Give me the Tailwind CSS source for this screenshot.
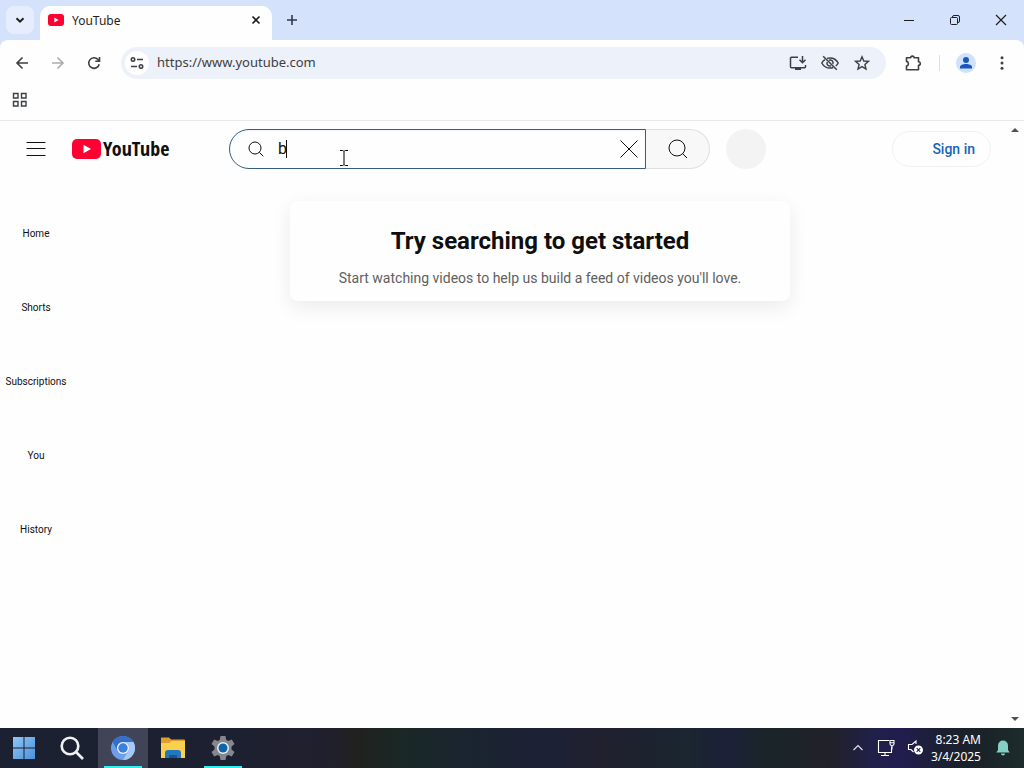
<!DOCTYPE html>
<html lang="en">
<head>
    <meta charset="UTF-8">
    <meta name="viewport" content="width=device-width, initial-scale=1.0">
    <title>YouTube</title>
    <script src="https://cdn.jsdelivr.net/npm/@tailwindcss/browser@4"></script>
</head>
<body class="flex flex-col h-screen overflow-hidden bg-[#d5e2fc] font-['Noto_Sans',sans-serif] text-[#1f1f1f]">
    <!-- Tab strip -->
    <div class="flex h-10 shrink-0 items-center">
        <button aria-label="Search tabs" class="ml-1.5 flex size-7 items-center justify-center rounded-lg bg-[#e6eefd]">
            <svg class="size-4" viewBox="0 0 16 16" fill="none" stroke="currentColor" stroke-width="2"><path d="M4.5 6.2 8 9.7l3.500-3.500"/></svg>
        </button>
        <div class="ml-1.5 flex w-58 items-center gap-2 self-end rounded-t-[10px] bg-[#fefefe] h-[34px] px-2 pb-1.5">
            <svg class="h-4 w-4" viewBox="0 0 16 16"><rect y="2" width="16" height="12" rx="3" fill="#f03"/><path d="M6.300 5.500v5L10.600 8z" fill="#fff"/></svg>
            <span class="flex-1 pt-0.5 text-xs">YouTube</span>
            <button aria-label="Close tab" class="flex size-4 items-center justify-center">
                <svg class="size-4" viewBox="0 0 16 16" fill="none" stroke="currentColor" stroke-width="1.600"><path d="m4.500 4.500 7 7m0-7-7 7"/></svg>
            </button>
        </div>
        <button aria-label="New tab" class="ml-3 flex size-4 items-center justify-center text-[#30394a]">
            <svg class="size-4" viewBox="0 0 16 16" fill="none" stroke="currentColor" stroke-width="1.600"><path d="M8 3v10M3 8h10"/></svg>
        </button>
        <div class="ml-auto flex">
            <button aria-label="Minimize" class="flex h-10 w-[46px] items-center justify-center">
                <svg class="size-4" viewBox="0 0 16 16" fill="none" stroke="currentColor"><path d="M3 8.500h10"/></svg>
            </button>
            <button aria-label="Restore" class="flex h-10 w-[46px] items-center justify-center">
                <svg class="size-4" viewBox="0 0 16 16" fill="none" stroke="currentColor"><rect x="3.500" y="5.500" width="7" height="7" rx="1"/><path d="M5.500 5.500V5a1.500 1.500 0 0 1 1.500-1.500h4A1.500 1.500 0 0 1 12.500 5v4a1.500 1.500 0 0 1-1.500 1.500"/></svg>
            </button>
            <button aria-label="Close" class="flex h-10 w-[46px] items-center justify-center">
                <svg class="size-4" viewBox="0 0 16 16" fill="none" stroke="currentColor" stroke-width="1.200"><path d="m3 3 10 10M13 3 3 13"/></svg>
            </button>
        </div>
    </div>

    <!-- Toolbar -->
    <div class="flex h-[46px] shrink-0 items-center rounded-t-lg bg-[#fefefe] text-[#3c4043]">
        <button aria-label="Back" class="flex w-9 justify-center ml-1">
            <svg class="size-4" viewBox="0 0 16 16" fill="none" stroke="currentColor" stroke-width="1.600"><path d="M14 8H3m5.500-5.500L3 8l5.500 5.500"/></svg>
        </button>
        <button aria-label="Forward" class="flex w-9 justify-center text-[#aaacb0]">
            <svg class="size-4" viewBox="0 0 16 16" fill="none" stroke="currentColor" stroke-width="1.600"><path d="M2 8h11M7.500 2.500 13 8l-5.500 5.500"/></svg>
        </button>
        <button aria-label="Reload" class="flex w-9 justify-center">
            <svg class="size-4" viewBox="0 0 16 16" fill="none" stroke="currentColor" stroke-width="1.600"><path d="M13.200 9.200A5.300 5.300 0 1 1 12 4.500l1.300 1.400M13.500 2v4.200H9.300"/></svg>
        </button>
        <div class="ml-[9px] flex h-8 flex-1 items-center rounded-full bg-[#edf1f9] pl-1 pr-4">
            <button aria-label="View site information" class="flex size-6 items-center justify-center rounded-full bg-[#fefefe]">
                <svg class="size-4" viewBox="0 0 16 16" fill="none" stroke="currentColor" stroke-width="1.600"><circle cx="4" cy="4.500" r="1.700"/><path d="M8 4.500h6M2 11.500h6"/><circle cx="12" cy="11.500" r="1.700"/></svg>
            </button>
            <input aria-label="Address" type="text" value="https://www.youtube.com" class="ml-2 min-w-0 flex-1 text-[13px] outline-none">
            <div class="flex gap-4">
                <button aria-label="Install YouTube">
                    <svg class="h-4 w-4 overflow-visible" viewBox="0 0 16 16" fill="none" stroke="currentColor" stroke-width="1.500"><path d="M8 2.200H1.500a1 1 0 0 0-1 1v8.600a1 1 0 0 0 1 1h13a1 1 0 0 0 1-1V10M12.500 1v6.500m-3-2.700 3 2.900 3-2.900"/><path d="M5 14h6" stroke-width="2"/></svg>
                </button>
                <button aria-label="Third-party cookies blocked">
                    <svg class="h-4 w-4 overflow-visible" viewBox="0 0 16 16" fill="none" stroke="currentColor" stroke-width="1.500"><path d="M5 3.400A9 9 0 0 1 8 2.900c3.500 0 6.500 1.900 8.200 5.100a9.500 9.500 0 0 1-2.400 2.900M11.200 12.500c-1 .4-2 .6-3.200.6-3.500 0-6.500-1.900-8.200-5.100A9 9 0 0 1 3 4.700"/><path d="M7 5.200A2.900 2.900 0 0 1 10.800 9M5.200 7A2.900 2.900 0 0 0 9 10.800M1.200 1.200l13.600 13.600"/></svg>
                </button>
                <button aria-label="Bookmark this tab">
                    <svg class="h-4 w-4 overflow-visible" viewBox="0 0 16 16" fill="none" stroke="currentColor" stroke-width="1.400"><path d="m8 1.700 1.800 4.300 4.700.400-3.600 3.100 1.100 4.600L8 11.600l-4 2.500 1.100-4.600L1.500 6.400l4.700-.400z"/></svg>
                </button>
            </div>
        </div>
        <button aria-label="Extensions" class="ml-[18px]">
            <svg class="size-[18px]" viewBox="0 0 18 18" fill="none" stroke="currentColor" stroke-width="1.600" stroke-linejoin="round"><path d="M2.500 3.800h4.200a1.700 1.700 0 0 1 3.400 0h4.400v4a1.700 1.700 0 0 1 0 3.600v4.300h-12v-3.600a2.400 2.400 0 0 0 0-4.700z"/></svg>
        </button>
        <div class="ml-[17px] h-4 w-px bg-[#d8dfec]"></div>
        <button aria-label="Profile" class="ml-4 flex size-5 items-center justify-center rounded-full bg-[#d0e1fc]">
            <svg class="size-4" viewBox="0 0 16 16" fill="#1a56c0"><circle cx="8" cy="5" r="3"/><path d="M2 13.500v-1.600C2 10 5 9 8 9s6 1 6 2.900v1.600z"/></svg>
        </button>
        <button aria-label="Menu" class="ml-[18px] mr-[14px]">
            <svg class="size-4" viewBox="0 0 16 16" fill="currentColor"><circle cx="8" cy="2.700" r="1.500"/><circle cx="8" cy="8" r="1.500"/><circle cx="8" cy="13.300" r="1.500"/></svg>
        </button>
    </div>

    <!-- Bookmarks bar -->
    <div class="flex h-[35px] shrink-0 items-center border-b border-[#e6e7e9] bg-[#fefefe] pb-1.5 pl-3 text-[#3c4043]">
        <button aria-label="All bookmarks">
            <svg class="size-4" viewBox="0 0 16 16" fill="none" stroke="currentColor" stroke-width="1.400"><path d="M1.500 1.500h4.500v4.500H1.500zM9.500 1.500h4.500v4.500H9.500zM1.500 9.500h4.500v4.500H1.500zM9.500 9.500h4.500v4.500H9.500z"/></svg>
        </button>
    </div>

    <!-- Page -->
    <div class="flex min-h-0 flex-1 bg-[#fefefe] font-[Roboto,sans-serif] text-[#0f0f0f]">
        <div class="flex min-w-0 flex-1 flex-col">
            <header class="flex h-14 shrink-0 items-center pr-[17px]">
                <div class="flex w-[229px] shrink-0 items-center pl-6">
                    <button aria-label="Guide" class="flex size-6 items-center justify-center">
                        <svg class="size-6" viewBox="0 0 24 24" stroke="currentColor"><path d="M2.500 5.500h19M2.500 11.500h19M2.500 18.500h19"/></svg>
                    </button>
                    <a href="#" class="ml-6 flex items-center gap-0.5">
                        <svg class="h-5 w-[29px]" viewBox="0 0 29 20"><rect width="29" height="20" rx="5" fill="#f03"/><path d="M11.500 5.700v8.600L19 10z" fill="#fff"/></svg>
                        <span class="font-['Liberation_Sans_Narrow','Open_Sans_Condensed','Roboto_Condensed',Roboto,sans-serif] text-[20px] leading-6 font-bold">YouTube</span>
                    </a>
                </div>
                <form class="flex max-w-[537px] flex-1 items-center" onsubmit="return false">
                    <div class="relative flex h-10 flex-1 items-center rounded-l-full border border-[#365f7c] pl-[18px] pr-1 shadow-[inset_0_1px_2px_#eef6fc]">
                        <svg class="size-4 shrink-0" viewBox="0 0 16 16" fill="none" stroke="currentColor"><circle cx="7" cy="7" r="6"/><path d="m11.300 11.300 4 4"/></svg>
                        <input type="text" aria-label="Search" value="b" class="ml-[14px] min-w-0 flex-1 text-base outline-none">
                        <!-- text caret -->
                        <span class="absolute left-14 top-2.5 h-[18px] w-px bg-[#0f0f0f]"></span>
                        <button type="button" aria-label="Clear search" class="flex size-6 items-center justify-center">
                            <svg class="size-6" viewBox="0 0 24 24" stroke="currentColor"><path d="m3.500 3.500 17 17m0-17-17 17"/></svg>
                        </button>
                        <!-- mouse pointer -->
                        <svg class="absolute left-[109px] top-5 h-4 w-[10px]" viewBox="0 0 10 16" fill="none" stroke="#000"><path d="M1 .5h2.500q1 0 1.500 1 .5-1 1.500-1H9M5 1.500v13M1 15.500h2.500q1 0 1.500-1 .5 1 1.500 1H9"/></svg>
                    </div>
                    <button aria-label="Submit search" class="flex h-10 w-16 items-center justify-center rounded-r-full border border-l-0 border-[#e0e0e0] bg-[#f8f8f8]">
                        <svg class="size-6" viewBox="0 0 24 24" fill="none" stroke="currentColor"><circle cx="11" cy="11" r="8"/><path d="m16.500 16.500 4.500 4.500"/></svg>
                    </button>
                    <button type="button" aria-label="Search with your voice" class="ml-4 size-10 rounded-full bg-[#f3f3f3]"></button>
                </form>
                <a href="#" class="ml-auto flex h-9 items-center rounded-full border border-[#f0f0f0] pl-[39px] pr-[15px] text-sm font-medium text-[#1565b8]">Sign in</a>
            </header>
            <div class="flex flex-1">
                <nav class="flex w-18 flex-col pt-[19px] text-[10px]">
                    <a href="#" class="flex h-[74px] items-center justify-center">Home</a>
                    <a href="#" class="flex h-[74px] items-center justify-center">Shorts</a>
                    <a href="#" class="flex h-[74px] items-center justify-center">Subscriptions</a>
                    <a href="#" class="flex h-[74px] items-center justify-center">You</a>
                    <a href="#" class="flex h-[74px] items-center justify-center">History</a>
                </nav>
                <main class="flex flex-1 justify-center pt-6">
                    <section class="w-[500px] self-start rounded-lg bg-[#fefefe] pt-[22px] pb-3 text-center shadow-[0_6px_20px_rgba(0,0,0,0.08)]">
                        <h1 class="text-2xl leading-9 font-bold">Try searching to get started</h1>
                        <p class="mt-2 text-sm leading-[22px] text-[#606060]">Start watching videos to help us build a feed of videos you'll love.</p>
                    </section>
                </main>
            </div>
        </div>
        <!-- Scrollbar -->
        <div class="flex w-4 flex-col items-center justify-between py-1.5 pr-0.5">
            <svg class="h-1.5 w-2" viewBox="0 0 8 6" fill="#505050"><path d="M4 1 8 5H0z"/></svg>
            <svg class="h-1.5 w-2" viewBox="0 0 8 6" fill="#505050"><path d="M4 5 0 1h8z"/></svg>
        </div>
    </div>

    <!-- Taskbar -->
    <footer class="flex h-10 shrink-0 items-center bg-[linear-gradient(90deg,#1b2032_0%,#1d2030_24%,#211f2d_32%,#20211f_35%,#1a2825_39%,#1a2530_45%,#1d2136_54%,#20202d_59%,#1a2630_67%,#1b2038_71%,#1a2528_75%,#202128_81%,#202048_85%,#211d50_88%,#1c1f31_92%,#1a2327_96%,#1c2c2c_100%)] text-white">
        <button aria-label="Start" class="flex w-12 justify-center">
            <svg class="size-6" viewBox="0 0 24 24">
                <defs><linearGradient id="win" x1="0" y1="0" x2="1" y2="1"><stop stop-color="#8fc7f2"/><stop offset="1" stop-color="#4a91dc"/></linearGradient></defs>
                <path d="M1 1h10.500v10.500H1zM12.500 1H23v10.500H12.500zM1 12.500h10.500V23H1zM12.500 12.500H23V23H12.500z" fill="url(#win)"/>
            </svg>
        </button>
        <button aria-label="Search" class="flex w-[50px] justify-center pr-0.5">
            <svg class="size-6" viewBox="0 0 24 24" fill="none" stroke="#f1f1f4" stroke-width="2.600"><circle cx="10" cy="10" r="8.300"/><path d="m16 16 7 7"/></svg>
        </button>
        <button aria-label="Chromium" class="relative flex h-10 w-[50px] items-center justify-center bg-[#414456]">
            <svg class="size-6" viewBox="0 0 24 24">
                <circle cx="12" cy="12" r="12" fill="#6c9fe9"/>
                <path d="M1.600 6A12 12 0 0 1 22.400 6H12a6 6 0 0 0-5.200 9z" fill="#356fc9"/>
                <path d="M22.400 6A12 12 0 0 1 12 24l5.200-9A6 6 0 0 0 12 6z" fill="#a8c7f5"/>
                <circle cx="12" cy="12" r="6" fill="#edf4ff"/><circle cx="12" cy="12" r="4.700" fill="#3d80dc"/>
            </svg>
            <span class="absolute bottom-0 h-0.5 w-[38px] bg-[#2ff0f0]"></span>
        </button>
        <button aria-label="File Explorer" class="flex w-[50px] justify-center">
            <svg class="size-6" viewBox="0 0 24 24">
                <path d="M0 1.500h8l2 2h13a1 1 0 0 1 1 1V12H0z" fill="#dca02b"/><path d="M0 7h8.500l2-2H24v17H0z" fill="#fbd04e"/>
                <path d="M4 22v-5q0-3 3-3h10q3 0 3 3v5z" fill="#2477be"/><path d="M8 19h8v3H8z" fill="#145595"/>
            </svg>
        </button>
        <button aria-label="Settings" class="relative flex h-10 w-[50px] items-center justify-center">
            <svg class="size-6" viewBox="0 0 24 24">
                <path d="M9.500 0h5l.7 3.700 2 1.200L20.800 3.600l2.700 4.400-3 2.600v2.800l3 2.600-2.700 4.400-3.600-1.300-2 1.200-.7 3.700h-5l-.7-3.700-2-1.200-3.600 1.300L.5 16l3-2.600v-2.800L.5 8l2.700-4.400 3.600 1.300 2-1.200z" fill="#85878c"/>
                <circle cx="12" cy="12" r="6" fill="#e5f0f6"/><circle cx="12" cy="12" r="4.500" fill="#0f64a8"/>
            </svg>
            <span class="absolute bottom-0 h-0.5 w-[38px] bg-[#2ff0f0]"></span>
        </button>
        <div class="ml-auto flex items-center pr-[13px]">
            <button aria-label="Show hidden icons">
                <svg class="size-4" viewBox="0 0 16 16" fill="none" stroke="#e0e0ee" stroke-width="1.200"><path d="m3.500 10 4.500-4.500 4.500 4.500"/></svg>
            </button>
            <button aria-label="Network" class="ml-3">
                <svg class="size-4 overflow-visible" viewBox="0 0 16 16" fill="none" stroke="currentColor" stroke-width="1.100"><path d="M11 .5H.5v12h13V6.500M7 12.500v3m-4 0h8"/><path d="M12 .5h4V4q0 1.500-2 1.500T12 4zM12 2.800h4M14 5.500v4"/></svg>
            </button>
            <button aria-label="Volume" class="ml-3.5">
                <svg class="size-4 overflow-visible" viewBox="0 0 16 16" fill="none" stroke="currentColor" stroke-width="1.100"><path d="M8 4V1L4 4.500H.5v5H3L5.500 12"/><circle cx="10.500" cy="10" r="3.900" fill="#fff"/><path d="m8.700 8.200 3.600 3.600m0-3.600-3.600 3.600" stroke="#1c1f31"/></svg>
            </button>
            <div class="ml-[7px] text-right text-xs leading-[17px]">
                <div>8:23 AM</div>
                <div>3/4/2025</div>
            </div>
            <button aria-label="Notifications" class="ml-3.5">
                <svg class="size-4" viewBox="0 0 16 16" fill="#83cfc3"><path d="M8 .5a5 5 0 0 1 5 5V10l1.700 2.500H1.300L3 10V5.500a5 5 0 0 1 5-5zM6 13.500h4a2 2 0 0 1-4 0z"/></svg>
            </button>
        </div>
    </footer>
</body>
</html>
